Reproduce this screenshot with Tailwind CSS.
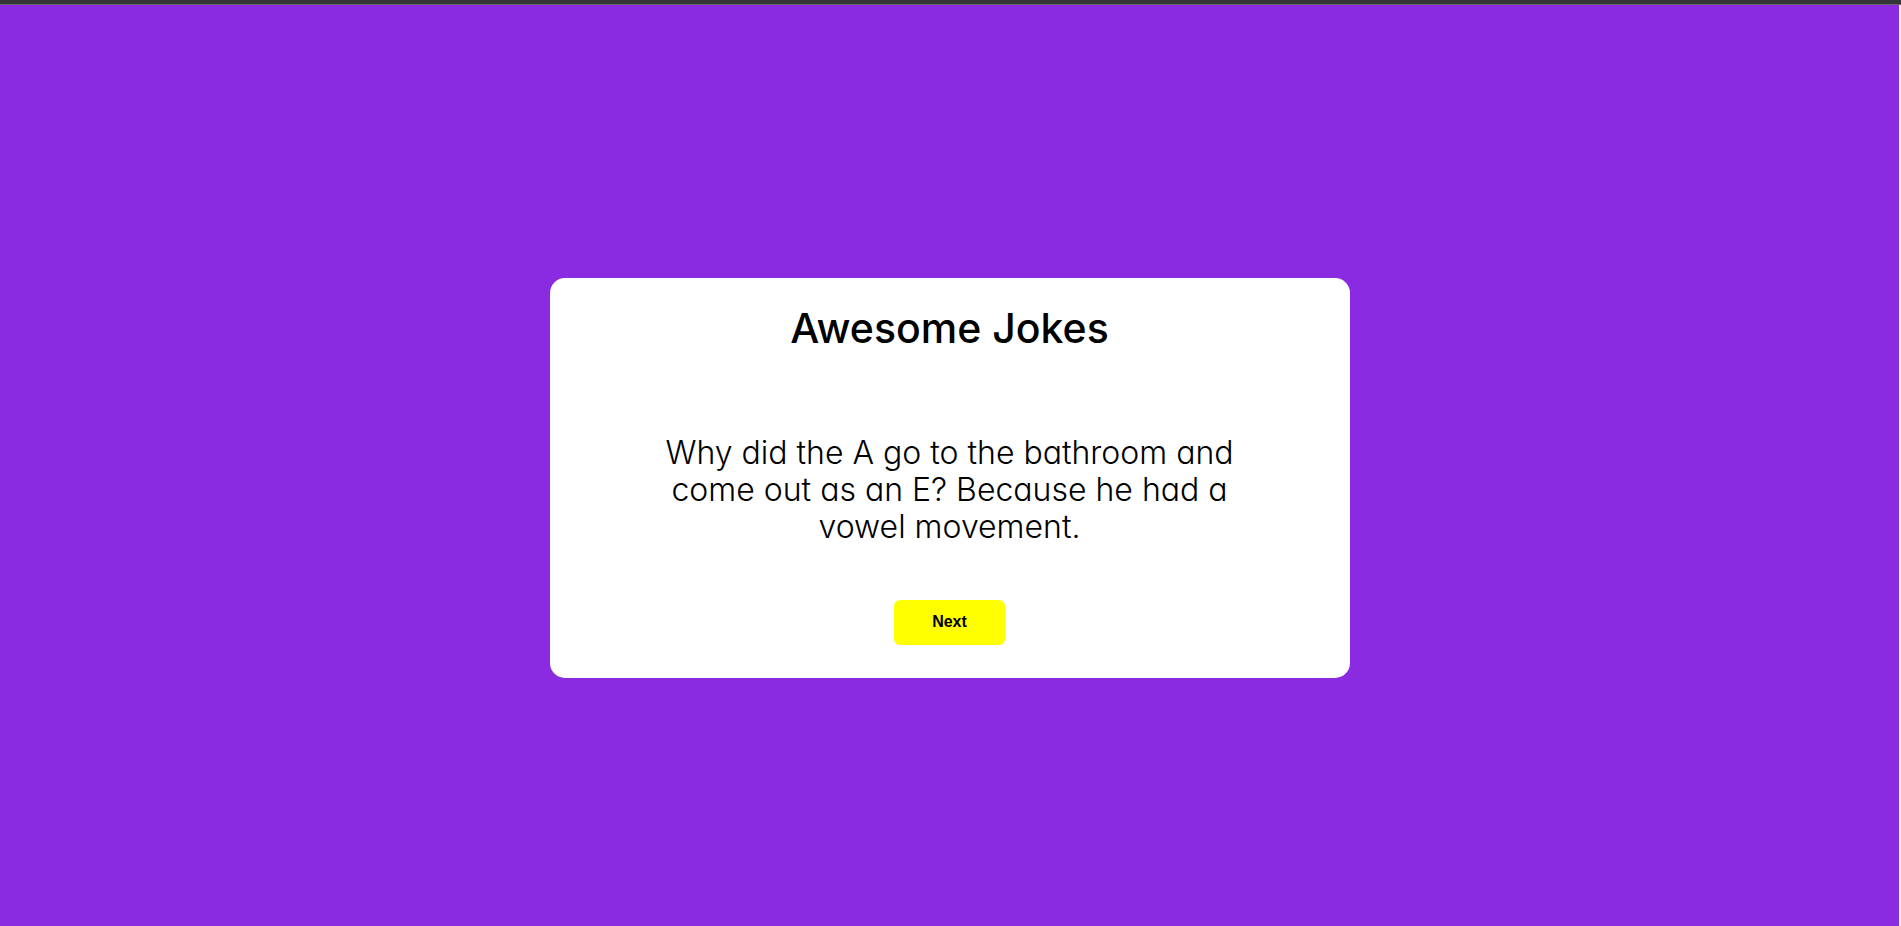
<!DOCTYPE html>
<html lang="en">
<head>
<meta charset="utf-8">
<meta name="viewport" content="width=device-width, initial-scale=1">
<title>Awesome Jokes</title>
<script src="https://cdn.jsdelivr.net/npm/@tailwindcss/browser@4"></script>
</head>
<body class="flex min-h-screen flex-col bg-[#f1f1f1] text-black">
<div class="h-[5px] shrink-0 border-b border-[#666666] bg-[#353535]"></div>
<main class="mr-[2px] flex grow items-center justify-center bg-[#8a2be2] pt-6">
<section class="flex min-h-[400px] w-full max-w-[800px] flex-col items-center rounded-[15px] bg-white px-[100px] pt-[22px] pb-[33px] text-center font-['Inter',sans-serif] [font-feature-settings:'cv11']">
<h1 class="text-[41px] leading-[56px] font-medium">Awesome Jokes</h1>
<p class="mt-[78px] text-[32px] leading-[37px] font-light">Why did the A go to the bathroom and come out as an E? Because he had a vowel movement.</p>
<button type="button" class="mt-auto h-[45px] w-[111px] cursor-pointer rounded-md bg-[#ffff00] font-['Liberation_Sans',Arial,sans-serif] text-base font-bold">Next</button>
</section>
</main>
</body>
</html>
